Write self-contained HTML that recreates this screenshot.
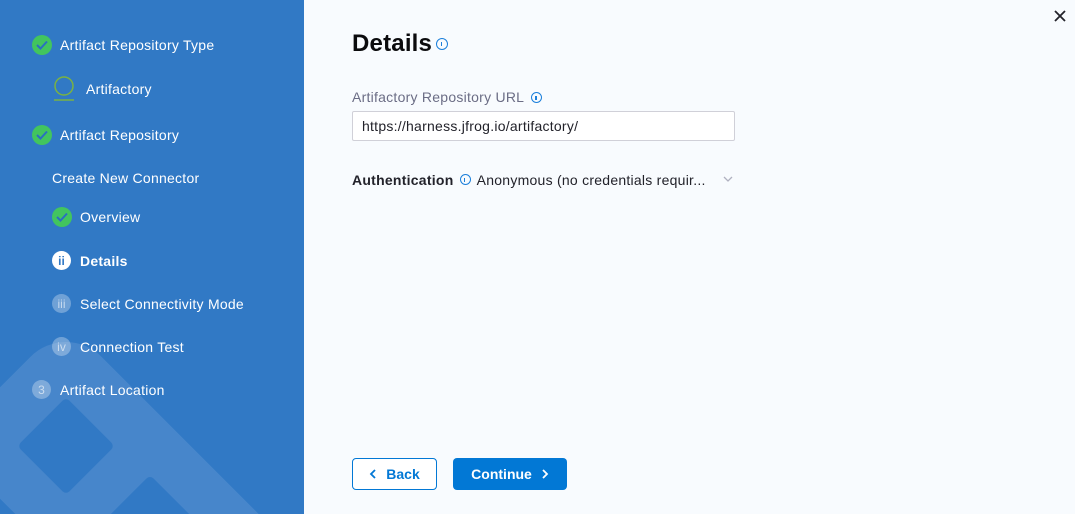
<!DOCTYPE html>
<html><head><meta charset="utf-8"><style>
*{margin:0;padding:0;box-sizing:border-box}
html,body{width:1075px;height:514px;overflow:hidden}
body{font-family:"Liberation Sans",sans-serif;background:#f8fbfe;position:relative}
.side{position:absolute;left:0;top:0;width:304px;height:514px;background:#3179c5;overflow:hidden;color:#fff}
.item{position:absolute;font-size:14px;letter-spacing:0.25px;white-space:nowrap;display:flex;align-items:center}
.chk{width:20px;height:20px;border-radius:50%;background:#42c55e;display:inline-flex;align-items:center;justify-content:center;margin-right:8px}
.num{width:19px;height:19px;border-radius:50%;background:rgba(255,255,255,.3);display:inline-flex;align-items:center;justify-content:center;margin-right:9px;font-size:12px;color:rgba(255,255,255,.6);letter-spacing:0}
.main{position:absolute;left:304px;top:0;right:0;bottom:0;overflow:hidden}
.info{display:inline-block;width:11px;height:11px;border:1.3px solid #1b7fdb;border-radius:50%;position:relative}
.info:after{content:"";position:absolute;left:3.5px;top:2.5px;width:1.3px;height:4px;background:#1b7fdb}
</style></head><body>
<div class="side">
<svg width="304" height="514" style="position:absolute;left:0;top:0">
<path d="M66 392L400 726L349 777L15 443Z" fill="#4786cb" stroke="#4786cb" stroke-width="100" stroke-linejoin="round"/>
<rect x="31.5" y="411.5" width="69" height="69" rx="5" fill="#3179c5" transform="rotate(45 66 446)"/>
<rect x="116" y="489" width="68" height="68" rx="5" fill="#3179c5" transform="rotate(45 150 523)"/>
</svg>
<div class="item" style="left:32px;top:35px"><span class="chk"><svg width="12" height="10"><path d="M1 5l3.5 3.5L11 1.5" stroke="#2a6fc0" stroke-width="2" fill="none"/></svg></span>Artifact Repository Type</div>
<div class="item" style="left:53px;top:76px"><svg width="22" height="26" style="margin-right:11px"><circle cx="11" cy="10" r="9" fill="none" stroke="#7ab243" stroke-width="1.5"/><line x1="1" y1="24" x2="21" y2="24" stroke="#7ab243" stroke-width="1.5"/></svg>Artifactory</div>
<div class="item" style="left:32px;top:125px"><span class="chk"><svg width="12" height="10"><path d="M1 5l3.5 3.5L11 1.5" stroke="#2a6fc0" stroke-width="2" fill="none"/></svg></span>Artifact Repository</div>
<div class="item" style="left:52px;top:170px">Create New Connector</div>
<div class="item" style="left:52px;top:207px"><span class="chk"><svg width="12" height="10"><path d="M1 5l3.5 3.5L11 1.5" stroke="#2a6fc0" stroke-width="2" fill="none"/></svg></span>Overview</div>
<div class="item" style="left:52px;top:251px;font-weight:bold"><span class="num" style="background:#fff;color:#3179c5;font-weight:bold">ii</span>Details</div>
<div class="item" style="left:52px;top:294px"><span class="num">iii</span>Select Connectivity Mode</div>
<div class="item" style="left:52px;top:337px"><span class="num">iv</span>Connection Test</div>
<div class="item" style="left:32px;top:380px"><span class="num">3</span>Artifact Location</div>
</div>
<div class="main">
<div style="position:absolute;left:48px;top:30px;font-size:24px;font-weight:bold;color:#0b0b0d;letter-spacing:0.2px">Details</div>
<span class="info" style="position:absolute;left:132px;top:38px;width:12px;height:12px"></span>
<div style="position:absolute;left:48px;top:89px;font-size:14px;letter-spacing:0.25px;color:#6b6d85">Artifactory Repository URL <span class="info" style="vertical-align:-1px;margin-left:3px"></span></div>
<div style="position:absolute;left:48px;top:111px;width:383px;height:30px;border:1px solid #d0d0d8;border-radius:2px;background:#fff;font-size:14px;letter-spacing:0.25px;color:#22222a;padding:6px 9px">https://harness.jfrog.io/artifactory/</div>
<div style="position:absolute;left:48px;top:172px;font-size:14px;letter-spacing:0.25px;color:#22222a;white-space:nowrap"><b>Authentication</b> <span class="info" style="vertical-align:0;margin:0 6px 0 2px"></span>Anonymous (no credentials requir...</div>
<svg style="position:absolute;left:418px;top:175px" width="12" height="8"><path d="M2 2l4 4 4-4" stroke="#b0b1c0" stroke-width="1.3" fill="none"/></svg>
<div style="position:absolute;left:48px;top:458px;width:85px;height:32px;border:1px solid #0278d5;border-radius:4px;background:#fff;color:#0278d5;font-size:14px;font-weight:bold;display:flex;align-items:center;justify-content:center"><svg width="8" height="10" style="margin-right:9px"><path d="M6 1L2 5l4 4" stroke="#0278d5" stroke-width="1.8" fill="none"/></svg>Back</div>
<div style="position:absolute;left:149px;top:458px;width:114px;height:32px;border-radius:4px;background:#0278d5;color:#fff;font-size:14px;font-weight:bold;display:flex;align-items:center;justify-content:center">Continue<svg width="8" height="10" style="margin-left:9px"><path d="M2 1l4 4-4 4" stroke="#fff" stroke-width="1.8" fill="none"/></svg></div>
<svg style="position:absolute;left:750px;top:10px" width="12" height="12"><path d="M1 1l10 10M11 1L1 11" stroke="#22222a" stroke-width="1.8"/></svg>
</div>
</body></html>
